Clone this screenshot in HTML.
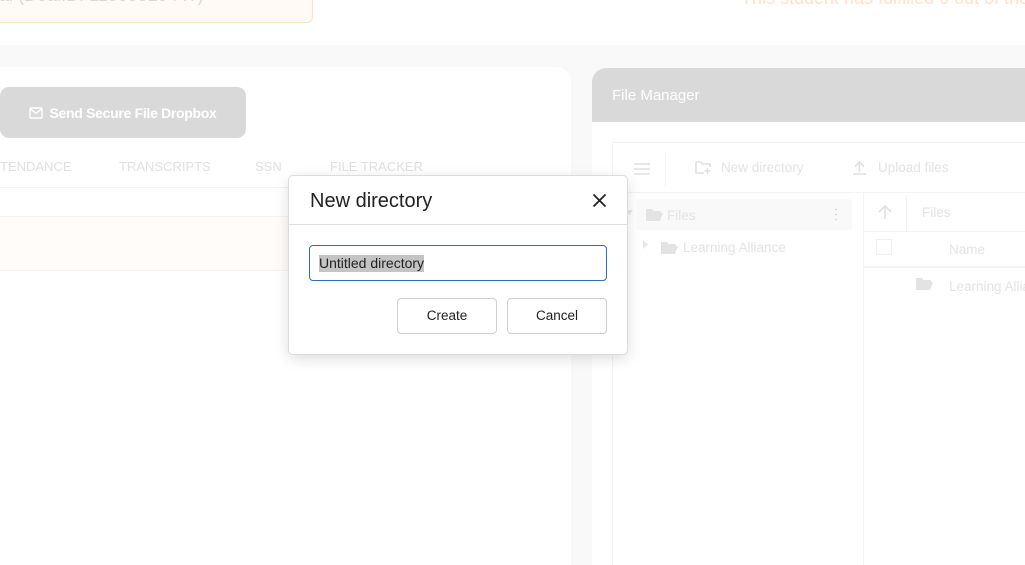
<!DOCTYPE html>
<html><head><meta charset="utf-8">
<style>
*{box-sizing:border-box;margin:0;padding:0}
html,body{width:1025px;height:565px;overflow:hidden}
body{background:#f9f9f9;font-family:"Liberation Sans",sans-serif}
#w{position:relative;width:1025px;height:565px;overflow:hidden}
.abs{position:absolute}
.top{left:0;top:0;width:1025px;height:45px;background:#fff}
.orange{left:0;top:0;width:313px;height:23px;background:#fffaf5;border:1px solid #fde3c6;border-top:none;border-left:none;border-radius:0 0 6px 0;overflow:hidden}
.orange span{position:absolute;left:-1px;top:-15px;font-size:18px;color:#d8d8d8;white-space:nowrap}
.tt{left:741px;top:0;width:284px;height:20px;overflow:hidden}
.tt span{position:absolute;left:0;top:-12px;font-size:18px;color:#fde2c7;white-space:nowrap}
.lcard{left:0;top:67px;width:571px;height:498px;background:#fff;border-radius:0 14px 0 0}
.btn{left:0;top:87px;width:246px;height:51px;background:#d9d9d9;border-radius:9px;color:#fff;font-weight:bold;font-size:14px;display:flex;align-items:center;justify-content:center;gap:6px;letter-spacing:-0.3px}
.tab{top:159px;font-size:13px;color:#e0e0e0}
.line{height:1px;background:#f4f4f4}
.rcard{left:592px;top:68px;width:433px;height:497px;background:#fff;border-radius:14px 0 0 0;overflow:hidden}
.rhead{left:0;top:0;width:433px;height:54px;background:#d9d9d9;color:#fff;font-size:15px;padding:19px 0 0 20px}
.inner{left:20px;top:74px;width:413px;height:423px;border-left:1px solid #f3f3f3;border-top:1px solid #f3f3f3;overflow:hidden}
.g{color:#e3e3e3;font-size:13.5px;white-space:nowrap}
.dlg{left:288px;top:175px;width:340px;height:180px;background:#fff;border:1px solid #dcdcdc;border-radius:5px;box-shadow:0 4px 14px rgba(0,0,0,0.13)}
.dlg h1{position:absolute;left:21px;top:14px;font-weight:normal;font-size:20px;color:#222}
.inp{left:20px;top:69px;width:298px;height:36px;border:1px solid #2a6fb4;border-radius:4px}
.inp span{position:absolute;left:9px;top:9px;font-size:14px;color:#222;background:#c4c4c4;line-height:17px}
.b{top:122px;width:100px;height:36px;border:1px solid #cfcfcf;border-radius:4px;font-size:13.5px;color:#222;text-align:center;line-height:34px}
</style></head><body><div id="w">
<div class="abs top"></div>
<div class="abs orange"><span>al (DealID: 1150952944?)</span></div>
<div class="abs tt"><span>This student has fulfilled 0 out of the requirements</span></div>

<div class="abs lcard"></div>
<div class="abs btn"><svg width="14" height="12" viewBox="0 0 14 12"><rect x="1" y="1" width="12" height="10" rx="1" fill="none" stroke="#fff" stroke-width="1.4"/><path d="M1.5 2 L7 6.5 L12.5 2" fill="none" stroke="#fff" stroke-width="1.4"/></svg>Send Secure File Dropbox</div>
<div class="abs tab" style="left:0">TENDANCE</div>
<div class="abs tab" style="left:119px">TRANSCRIPTS</div>
<div class="abs tab" style="left:255px">SSN</div>
<div class="abs tab" style="left:330px">FILE TRACKER</div>
<div class="abs line" style="left:0;top:187px;width:560px"></div>
<div class="abs line" style="left:0;top:216px;width:560px"></div>
<div class="abs" style="left:0;top:217px;width:560px;height:53px;background:#fffcfa"></div>
<div class="abs line" style="left:0;top:270px;width:560px"></div>

<div class="abs rcard">
  <div class="abs rhead">File Manager</div>
  <div class="abs inner">
    <svg class="abs" style="left:20px;top:19px" width="18" height="14"><path d="M1 2H17M1 7H17M1 12H17" stroke="#e0e0e0" stroke-width="1.6"/></svg>
    <div class="abs" style="left:52px;top:8px;width:1px;height:36px;background:#f2f2f2"></div>
    <svg class="abs" style="left:82px;top:17px" width="17" height="15"><path d="M1 2H6L7.5 4H15V7M1 2V13H9" fill="none" stroke="#e0e0e0" stroke-width="1.6"/><path d="M12.5 8V14M9.5 11H15.5" stroke="#e0e0e0" stroke-width="1.6"/></svg>
    <div class="abs g" style="left:108px;top:17px">New directory</div>
    <svg class="abs" style="left:239px;top:17px" width="15" height="15"><path d="M7.5 12V2M3 6.5L7.5 2L12 6.5M1 14H14" fill="none" stroke="#e0e0e0" stroke-width="1.6"/></svg>
    <div class="abs g" style="left:265px;top:17px">Upload files</div>
    <div class="abs" style="left:0;top:49px;width:413px;height:1px;background:#f3f3f3"></div>
    <div class="abs" style="left:24px;top:56px;width:215px;height:31px;background:#f9f9f9"></div>
    <svg class="abs" style="left:13px;top:67px" width="7" height="6"><path d="M0 0H7L3.5 5Z" fill="#e6e6e6"/></svg>
    <svg class="abs" style="left:32px;top:64px" width="19" height="15"><path d="M1 2H7L8.5 4H16V6H5L1 14Z M1 14L5 6H18L15 14Z" fill="#e3e3e3"/></svg>
    <div class="abs g" style="left:54px;top:65px">Files</div>
    <div class="abs" style="left:222px;top:64px;width:2px;height:14px;background:radial-gradient(circle,#ddd 0.9px,transparent 1px) 0 0/2px 5px"></div>
    <svg class="abs" style="left:30px;top:97px" width="6" height="9"><path d="M0 0L5 4.5L0 9Z" fill="#e6e6e6"/></svg>
    <svg class="abs" style="left:47px;top:97px" width="19" height="15"><path d="M1 2H7L8.5 4H16V6H5L1 14Z M1 14L5 6H18L15 14Z" fill="#e3e3e3"/></svg>
    <div class="abs g" style="left:70px;top:97px">Learning Alliance</div>
    <div class="abs" style="left:250px;top:49px;width:1px;height:374px;background:#f3f3f3"></div>
    <svg class="abs" style="left:265px;top:61px" width="14" height="16"><path d="M7 15V2M1 8L7 2L13 8" fill="none" stroke="#e0e0e0" stroke-width="1.6"/></svg>
    <div class="abs" style="left:293px;top:52px;width:1px;height:36px;background:#f3f3f3"></div>
    <div class="abs g" style="left:309px;top:62px">Files</div>
    <div class="abs" style="left:251px;top:88px;width:162px;height:1px;background:#f3f3f3"></div>
    <div class="abs" style="left:263px;top:96px;width:16px;height:16px;border:1px solid #f0f0f0"></div>
    <div class="abs g" style="left:336px;top:99px">Name</div>
    <div class="abs" style="left:251px;top:123px;width:162px;height:2px;background:#f3f3f3"></div>
    <svg class="abs" style="left:302px;top:133px" width="19" height="15"><path d="M1 2H7L8.5 4H16V6H5L1 14Z M1 14L5 6H18L15 14Z" fill="#e3e3e3"/></svg>
    <div class="abs" style="left:336px;top:135px;width:77px;height:20px;overflow:hidden"><span class="g">Learning Alliance</span></div>
  </div>
</div>

<div class="abs dlg">
  <h1>New directory</h1>
  <svg class="abs" style="left:303px;top:17px" width="15" height="15"><path d="M1.5 1.5L13.5 13.5M13.5 1.5L1.5 13.5" stroke="#222" stroke-width="1.8"/></svg>
  <div class="abs" style="left:0;top:48px;width:338px;height:1px;background:#dedede"></div>
  <div class="abs inp"><span>Untitled directory</span></div>
  <div class="abs b" style="left:108px">Create</div>
  <div class="abs b" style="left:218px">Cancel</div>
</div>
</div></body></html>
